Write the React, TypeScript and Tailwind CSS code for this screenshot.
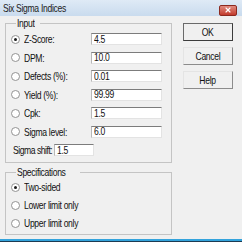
import { X } from 'lucide-react'

const inputRows = [
  { label: 'Z-Score:', value: '4.5', checked: true },
  { label: 'DPM:', value: '10.0', checked: false },
  { label: 'Defects (%):', value: '0.01', checked: false },
  { label: 'Yield (%):', value: '99.99', checked: false },
  { label: 'Cpk:', value: '1.5', checked: false },
  { label: 'Sigma level:', value: '6.0', checked: false },
]

const specRows = [
  { label: 'Two-sided', checked: true },
  { label: 'Lower limit only', checked: false },
  { label: 'Upper limit only', checked: false },
]

// the old dialog font is narrow, so squeeze the glyphs a bit
function Txt({ children, center = false }: { children: string; center?: boolean }) {
  return (
    <span
      className={`inline-block whitespace-nowrap scale-x-[0.78] ${center ? 'origin-center' : 'origin-left'}`}
    >
      {children}
    </span>
  )
}

function Radio({ checked }: { checked: boolean }) {
  return (
    <span className="w-[9px] h-[9px] rounded-full border border-[#939393] bg-white flex items-center justify-center shrink-0">
      {checked && <span className="w-[3px] h-[3px] rounded-full bg-[#1a1a1a]" />}
    </span>
  )
}

function Field({ value, className = '' }: { value: string; className?: string }) {
  return (
    <div
      className={`h-[12px] bg-white border border-[#e3e3e3] border-t-[#7c7c7c] border-l-[#b8b8b8] flex items-center pl-[2px] leading-none overflow-hidden ${className}`}
    >
      <Txt>{value}</Txt>
    </div>
  )
}

function Button({ label, isDefault = false }: { label: string; isDefault?: boolean }) {
  return (
    <div
      className={`h-[18px] w-[50px] flex items-center justify-center bg-[#f0f0f0] border ${
        isDefault
          ? 'border-[#6a6a6a] border-b-[#3c3c3c] border-r-[#3c3c3c]'
          : 'border-[#e4e4e4] border-b-[#8c8c8c] border-r-[#8c8c8c]'
      }`}
    >
      <Txt center>{label}</Txt>
    </div>
  )
}

export default function App() {
  return (
    <div
      className="w-[242px] h-[242px] bg-[#f0f0f0] flex flex-col overflow-hidden text-[11px] text-[#111] tracking-[-0.4px]"
      style={{ fontFamily: '"Liberation Sans", Arial, sans-serif' }}
    >
      {/* Title bar */}
      <div className="h-[16px] shrink-0 bg-gradient-to-b from-[#dfeaf6] to-[#c9dbee] flex items-center justify-between pl-[3px] pr-[5px]">
        <span className="text-[#1c1c1c] leading-none pt-[1px]">
          <Txt>Six Sigma Indices</Txt>
        </span>
        <div className="w-[18px] h-[11px] mt-[4px] rounded-[2px] bg-gradient-to-b from-[#e08a80] to-[#c2392c] border border-[#8c2a20] flex items-center justify-center">
          <X className="w-[8px] h-[8px] text-white" strokeWidth={3.5} />
        </div>
      </div>

      {/* Body */}
      <div className="flex-1 flex pl-[5px] pr-[8px]">
        <div className="w-[167px] flex flex-col">
          <fieldset className="border border-[#c4c4c4] pl-[5px] pr-[9px] pb-[2px] mt-[1px]">
            <legend className="ml-[5px] px-[1px] leading-[13px]">
              <Txt>Input</Txt>
            </legend>
            {inputRows.map((row) => (
              <div key={row.label} className="h-[18.5px] flex items-center">
                <Radio checked={row.checked} />
                <span className="ml-[4px] flex-1">
                  <Txt>{row.label}</Txt>
                </span>
                <Field value={row.value} className="w-[71px]" />
              </div>
            ))}
            <div className="h-[18.5px] flex items-center pl-[2px]">
              <span className="w-[41px] shrink-0 tracking-[-0.6px]">
                <Txt>Sigma shift:</Txt>
              </span>
              <Field value="1.5" className="w-[40px]" />
            </div>
          </fieldset>

          <fieldset className="border border-[#c4c4c4] pl-[5px] pb-[1px] mt-[3px]">
            <legend className="ml-[5px] px-[1px] leading-[13px]">
              <Txt>Specifications</Txt>
            </legend>
            {specRows.map((row) => (
              <div key={row.label} className="h-[18px] flex items-center">
                <Radio checked={row.checked} />
                <span className="ml-[4px]">
                  <Txt>{row.label}</Txt>
                </span>
              </div>
            ))}
          </fieldset>
        </div>

        <div className="ml-[11px] mt-[7px] flex flex-col gap-[6px]">
          <Button label="OK" isDefault />
          <Button label="Cancel" />
          <Button label="Help" />
        </div>
      </div>

      {/* Window frame bottom */}
      <div className="h-[2px] shrink-0 bg-[#33a3dc]" />
      <div className="h-[1px] shrink-0 bg-[#1d3b52]" />
    </div>
  )
}
